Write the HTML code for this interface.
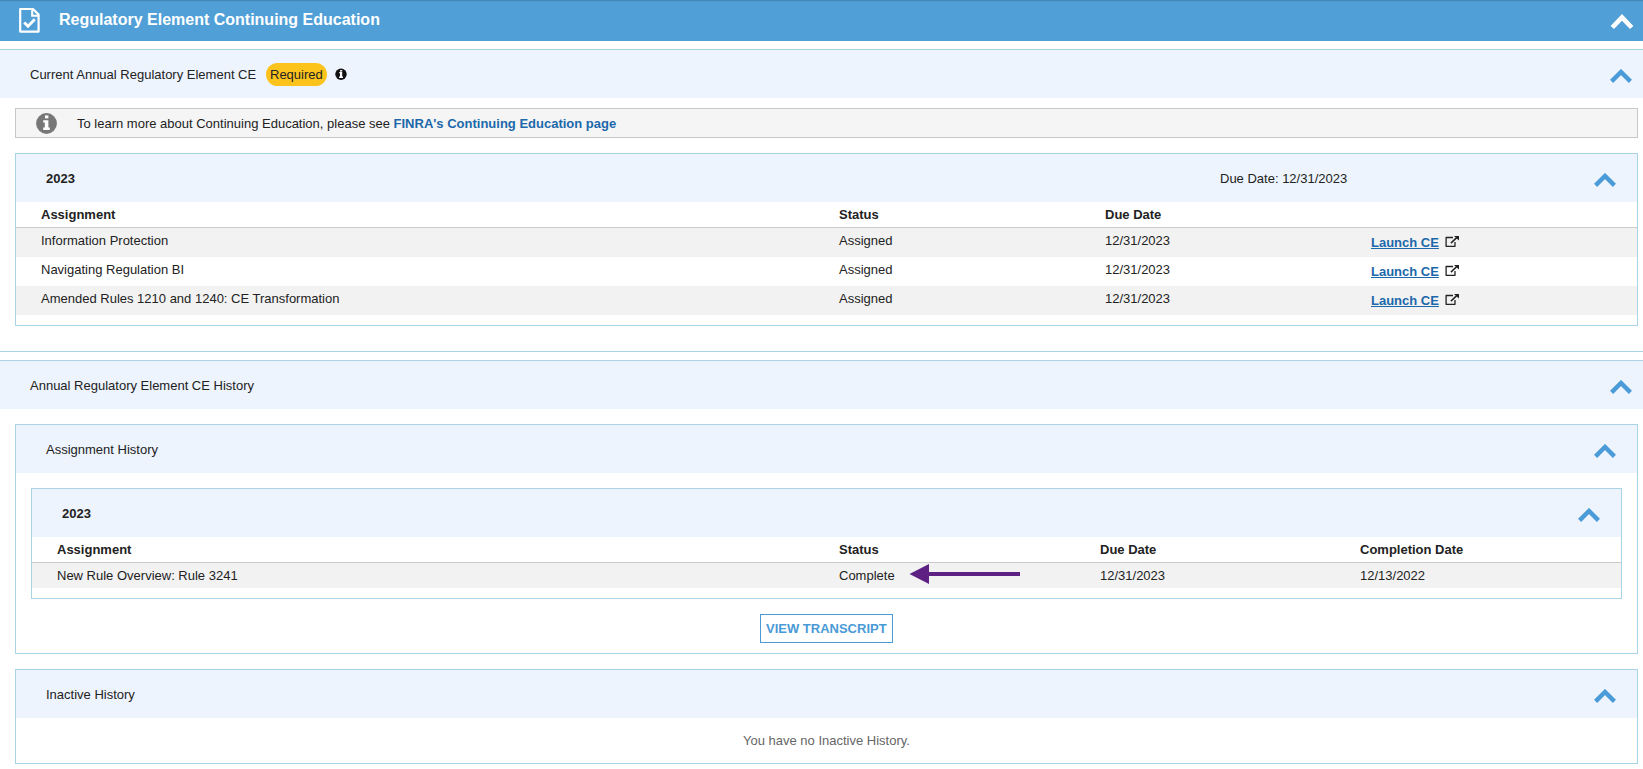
<!DOCTYPE html>
<html><head><meta charset="utf-8">
<style>
html,body{margin:0;padding:0;background:#fff;width:1643px;height:769px;overflow:hidden;position:relative;}
body{font-family:"Liberation Sans",sans-serif;font-size:13px;color:#222;}
.a{position:absolute;}
.t{position:absolute;line-height:15px;white-space:nowrap;}
.b{font-weight:bold;}
.hdr{left:0;top:0;width:1643px;height:41px;background:#509fd7;}
.hdr .shade{left:0;top:0;width:1643px;height:2px;background:linear-gradient(#3f7fb2,#509fd7);}
.bl{background:#a9d4e6;}
.sh{background:#edf4fd;}
.row{background:#f2f2f2;}
.div{background:#cbcbcb;}
.chev{position:absolute;width:22px;height:14px;}
</style></head>
<body>
<!-- Top header -->
<div class="a hdr"><div class="a shade"></div></div>
<svg class="a" style="left:18px;top:7px" width="23" height="27" viewBox="0 0 23 27">
  <path d="M2.2 2 H15 L20.6 7.6 V24.6 H2.2 Z" fill="none" stroke="#fff" stroke-width="2.2" stroke-linejoin="round"/>
  <path d="M14.2 1.5 V8.8 H21" fill="none" stroke="#fff" stroke-width="2.1"/>
  <path d="M6.2 15.6 L10 19.3 L16.8 12.2" fill="none" stroke="#fff" stroke-width="2.8"/>
</svg>
<div class="t b" style="left:59px;top:11px;font-size:16px;line-height:18px;color:#fff">Regulatory Element Continuing Education</div>
<svg class="a" style="left:1610px;top:13px" width="24" height="17" viewBox="0 0 24 17"><path d="M2.3 14.5 L12 4.3 L21.7 14.5" fill="none" stroke="#fff" stroke-width="4.7"/></svg>

<!-- Section 1 -->
<div class="a bl" style="left:0;top:49px;width:1643px;height:1px"></div>
<div class="a sh" style="left:0;top:50px;width:1643px;height:48px"></div>
<div class="t" style="left:30px;top:67px">Current Annual Regulatory Element CE</div>
<div class="a" style="left:266px;top:63px;width:61px;height:23px;border-radius:12px;background:#fdc31d"></div>
<div class="t" style="left:270px;top:67px">Required</div>
<svg class="a" style="left:335px;top:68px" width="12" height="12" viewBox="0 0 12 12"><circle cx="6" cy="6.2" r="5.7" fill="#111"/><rect x="5" y="2.1" width="2.2" height="1.5" fill="#fff"/><path d="M4.3 4.1 H7.2 V8.6 H8 V9.9 H4.1 V8.6 H5 V5.3 H4.3 Z" fill="#fff"/></svg>
<svg class="chev" style="left:1610px;top:69px" viewBox="0 0 22 14"><path d="M1.6 12.4 L11 3 L20.4 12.4" fill="none" stroke="#4a9bd8" stroke-width="4.4"/></svg>

<!-- info box -->
<div class="a" style="left:15px;top:108px;width:1621px;height:28px;border:1px solid #c8c8c8;background:#f5f5f5"></div>
<svg class="a" style="left:36px;top:113px" width="21" height="21" viewBox="0 0 21 21"><circle cx="10.5" cy="10.5" r="10.4" fill="#777"/><rect x="9" y="2.4" width="3.4" height="3" fill="#fff"/><path d="M7.2 7.2 H12.4 V14.6 H13.8 V17.1 H7.2 V14.6 H8.8 V9.4 H7.2 Z" fill="#fff"/></svg>
<div class="t" style="left:77px;top:116px">To learn more about Continuing Education, please see <span class="b" style="color:#1c68aa">FINRA's Continuing Education page</span></div>

<!-- 2023 panel -->
<div class="a" style="left:15px;top:153px;width:1621px;height:171px;border:1px solid #a9d4e6;background:#fff"></div>
<div class="a sh" style="left:16px;top:154px;width:1621px;height:48px"></div>
<div class="t b" style="left:46px;top:171px">2023</div>
<div class="t" style="left:1220px;top:171px">Due Date: 12/31/2023</div>
<svg class="chev" style="left:1594px;top:173px" viewBox="0 0 22 14"><path d="M1.6 12.4 L11 3 L20.4 12.4" fill="none" stroke="#4a9bd8" stroke-width="4.4"/></svg>
<div class="t b" style="left:41px;top:207px">Assignment</div>
<div class="t b" style="left:839px;top:207px">Status</div>
<div class="t b" style="left:1105px;top:207px">Due Date</div>
<div class="a div" style="left:16px;top:227px;width:1621px;height:1px"></div>
<div class="a row" style="left:16px;top:228px;width:1621px;height:29px"></div>
<div class="a row" style="left:16px;top:286px;width:1621px;height:29px"></div>
<div class="t" style="left:41px;top:233px">Information Protection</div>
<div class="t" style="left:839px;top:233px">Assigned</div>
<div class="t" style="left:1105px;top:233px">12/31/2023</div>
<div class="t" style="left:41px;top:262px">Navigating Regulation BI</div>
<div class="t" style="left:839px;top:262px">Assigned</div>
<div class="t" style="left:1105px;top:262px">12/31/2023</div>
<div class="t" style="left:41px;top:291px">Amended Rules 1210 and 1240: CE Transformation</div>
<div class="t" style="left:839px;top:291px">Assigned</div>
<div class="t" style="left:1105px;top:291px">12/31/2023</div>
<div class="t b" style="left:1371px;top:235px;color:#1c68aa;text-decoration:underline">Launch CE</div>
<div class="t b" style="left:1371px;top:264px;color:#1c68aa;text-decoration:underline">Launch CE</div>
<div class="t b" style="left:1371px;top:293px;color:#1c68aa;text-decoration:underline">Launch CE</div>

<svg class="a" style="left:1444px;top:234px" width="16" height="14" viewBox="0 0 16 14"><path d="M9 3.5 H2.1 V12.3 H11 V8" fill="none" stroke="#222" stroke-width="1.3" stroke-linejoin="round"/><path d="M6.9 9.1 L13 3.4" stroke="#222" stroke-width="1.5"/><path d="M10 2 H15 V6.5 Z" fill="#222"/></svg>
<svg class="a" style="left:1444px;top:263px" width="16" height="14" viewBox="0 0 16 14"><path d="M9 3.5 H2.1 V12.3 H11 V8" fill="none" stroke="#222" stroke-width="1.3" stroke-linejoin="round"/><path d="M6.9 9.1 L13 3.4" stroke="#222" stroke-width="1.5"/><path d="M10 2 H15 V6.5 Z" fill="#222"/></svg>
<svg class="a" style="left:1444px;top:292px" width="16" height="14" viewBox="0 0 16 14"><path d="M9 3.5 H2.1 V12.3 H11 V8" fill="none" stroke="#222" stroke-width="1.3" stroke-linejoin="round"/><path d="M6.9 9.1 L13 3.4" stroke="#222" stroke-width="1.5"/><path d="M10 2 H15 V6.5 Z" fill="#222"/></svg>
<!-- Section 1 bottom border -->
<div class="a bl" style="left:0;top:351px;width:1643px;height:1px"></div>

<!-- Section 2 -->
<div class="a bl" style="left:0;top:360px;width:1643px;height:1px"></div>
<div class="a sh" style="left:0;top:361px;width:1643px;height:48px"></div>
<div class="t" style="left:30px;top:378px">Annual Regulatory Element CE History</div>
<svg class="chev" style="left:1610px;top:380px" viewBox="0 0 22 14"><path d="M1.6 12.4 L11 3 L20.4 12.4" fill="none" stroke="#4a9bd8" stroke-width="4.4"/></svg>

<!-- Assignment History panel -->
<div class="a" style="left:15px;top:424px;width:1621px;height:228px;border:1px solid #a9d4e6;background:#fff"></div>
<div class="a sh" style="left:16px;top:425px;width:1621px;height:48px"></div>
<div class="t" style="left:46px;top:442px">Assignment History</div>
<svg class="chev" style="left:1594px;top:444px" viewBox="0 0 22 14"><path d="M1.6 12.4 L11 3 L20.4 12.4" fill="none" stroke="#4a9bd8" stroke-width="4.4"/></svg>

<!-- inner 2023 -->
<div class="a" style="left:31px;top:488px;width:1589px;height:109px;border:1px solid #a9d4e6;background:#fff"></div>
<div class="a sh" style="left:32px;top:489px;width:1589px;height:48px"></div>
<div class="t b" style="left:62px;top:506px">2023</div>
<svg class="chev" style="left:1578px;top:508px" viewBox="0 0 22 14"><path d="M1.6 12.4 L11 3 L20.4 12.4" fill="none" stroke="#4a9bd8" stroke-width="4.4"/></svg>
<div class="t b" style="left:57px;top:542px">Assignment</div>
<div class="t b" style="left:839px;top:542px">Status</div>
<div class="t b" style="left:1100px;top:542px">Due Date</div>
<div class="t b" style="left:1360px;top:542px">Completion Date</div>
<div class="a div" style="left:32px;top:562px;width:1589px;height:1px"></div>
<div class="a row" style="left:32px;top:563px;width:1589px;height:25px"></div>
<div class="t" style="left:57px;top:568px">New Rule Overview: Rule 3241</div>
<div class="t" style="left:839px;top:568px">Complete</div>
<div class="t" style="left:1100px;top:568px">12/31/2023</div>
<div class="t" style="left:1360px;top:568px">12/13/2022</div>
<svg class="a" style="left:909px;top:563px" width="112" height="22" viewBox="0 0 112 22"><path d="M0.5 11 L20 1 V21 Z" fill="#5e2183"/><rect x="19" y="9" width="92" height="4" fill="#5e2183"/></svg>

<div class="a" style="left:760px;top:614px;width:131px;height:27px;border:1px solid #4a9ad6"></div>
<div class="t b" style="left:766px;top:621px;color:#4a9ad6">VIEW TRANSCRIPT</div>

<!-- Inactive History -->
<div class="a" style="left:15px;top:669px;width:1621px;height:93px;border:1px solid #a9d4e6;background:#fff"></div>
<div class="a sh" style="left:16px;top:670px;width:1621px;height:48px"></div>
<div class="t" style="left:46px;top:687px">Inactive History</div>
<svg class="chev" style="left:1594px;top:689px" viewBox="0 0 22 14"><path d="M1.6 12.4 L11 3 L20.4 12.4" fill="none" stroke="#4a9bd8" stroke-width="4.4"/></svg>
<div class="t" style="left:743px;top:733px;color:#666">You have no Inactive History.</div>
</body></html>
